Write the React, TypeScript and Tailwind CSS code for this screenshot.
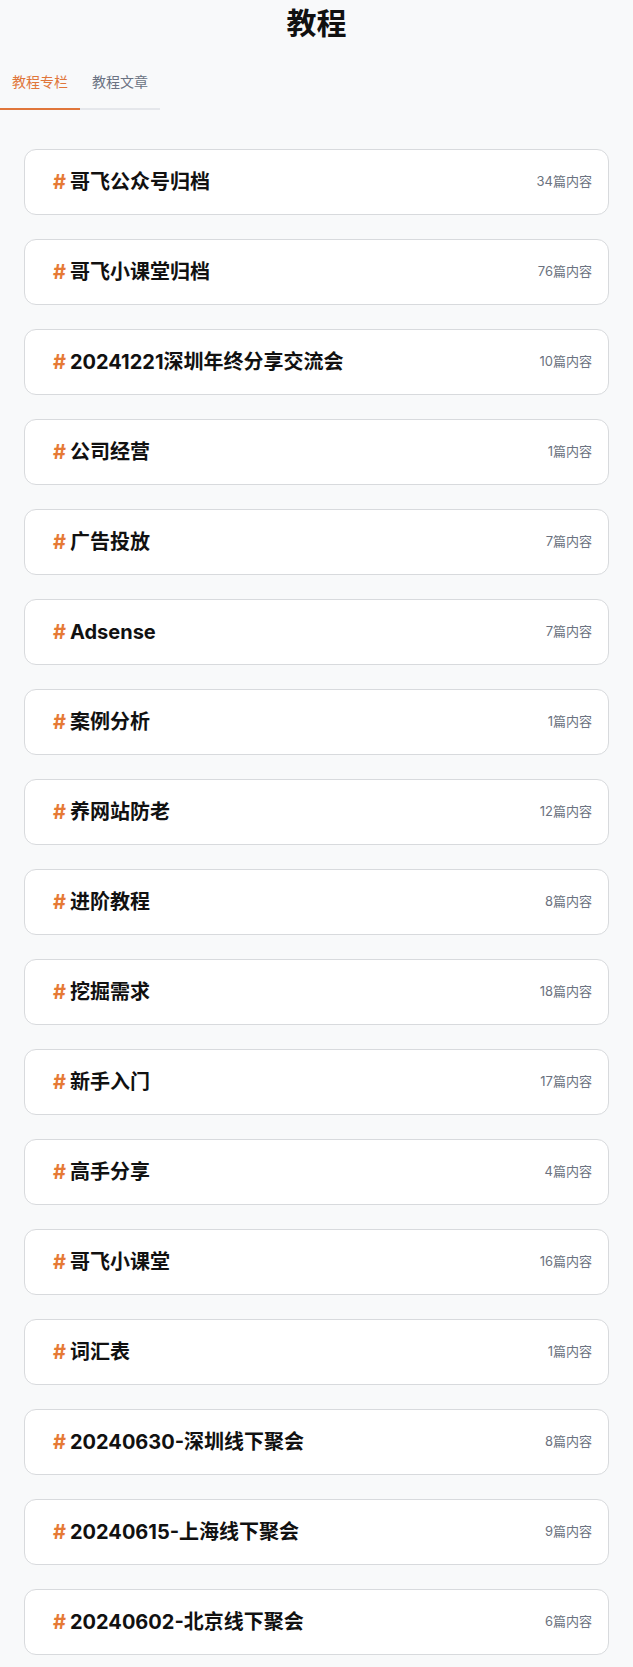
const columns = [
  { name: "哥飞公众号归档", count: 34 },
  { name: "哥飞小课堂归档", count: 76 },
  { name: "20241221深圳年终分享交流会", count: 10 },
  { name: "公司经营", count: 1 },
  { name: "广告投放", count: 7 },
  { name: "Adsense", count: 7 },
  { name: "案例分析", count: 1 },
  { name: "养网站防老", count: 12 },
  { name: "进阶教程", count: 8 },
  { name: "挖掘需求", count: 18 },
  { name: "新手入门", count: 17 },
  { name: "高手分享", count: 4 },
  { name: "哥飞小课堂", count: 16 },
  { name: "词汇表", count: 1 },
  { name: "20240630-深圳线下聚会", count: 8 },
  { name: "20240615-上海线下聚会", count: 9 },
  { name: "20240602-北京线下聚会", count: 6 },
];

export default function App() {
  return (
    <div className="min-h-screen bg-[#f8f9fa] pb-3 font-['Inter','Noto_Sans_CJK_SC',sans-serif]">
      <h1 className="pt-[5px] text-center text-[30px] font-bold leading-9 text-[#111]">教程</h1>

      <div className="mt-[31px] flex">
        <div className="w-20 border-b-2 border-[#e0763a] pb-4 text-center text-sm leading-5 text-[#e0763a]">
          教程专栏
        </div>
        <div className="w-20 border-b-2 border-gray-200 pb-4 text-center text-sm leading-5 text-gray-500">
          教程文章
        </div>
      </div>

      <div className="mt-[39px] flex flex-col gap-6 px-6">
        {columns.map((c) => (
          <div
            key={c.name}
            className="flex h-[66px] items-center justify-between rounded-xl border border-[#d8dadd] bg-white pl-7 pr-4"
          >
            <div className="flex items-center text-[20px] font-bold leading-7 text-[#111]">
              <span className="text-[#e67a35]">#</span>
              <span className="ml-1">{c.name}</span>
            </div>
            <span className="text-[13px] text-[#6b7280]">{c.count}篇内容</span>
          </div>
        ))}
      </div>
    </div>
  );
}
